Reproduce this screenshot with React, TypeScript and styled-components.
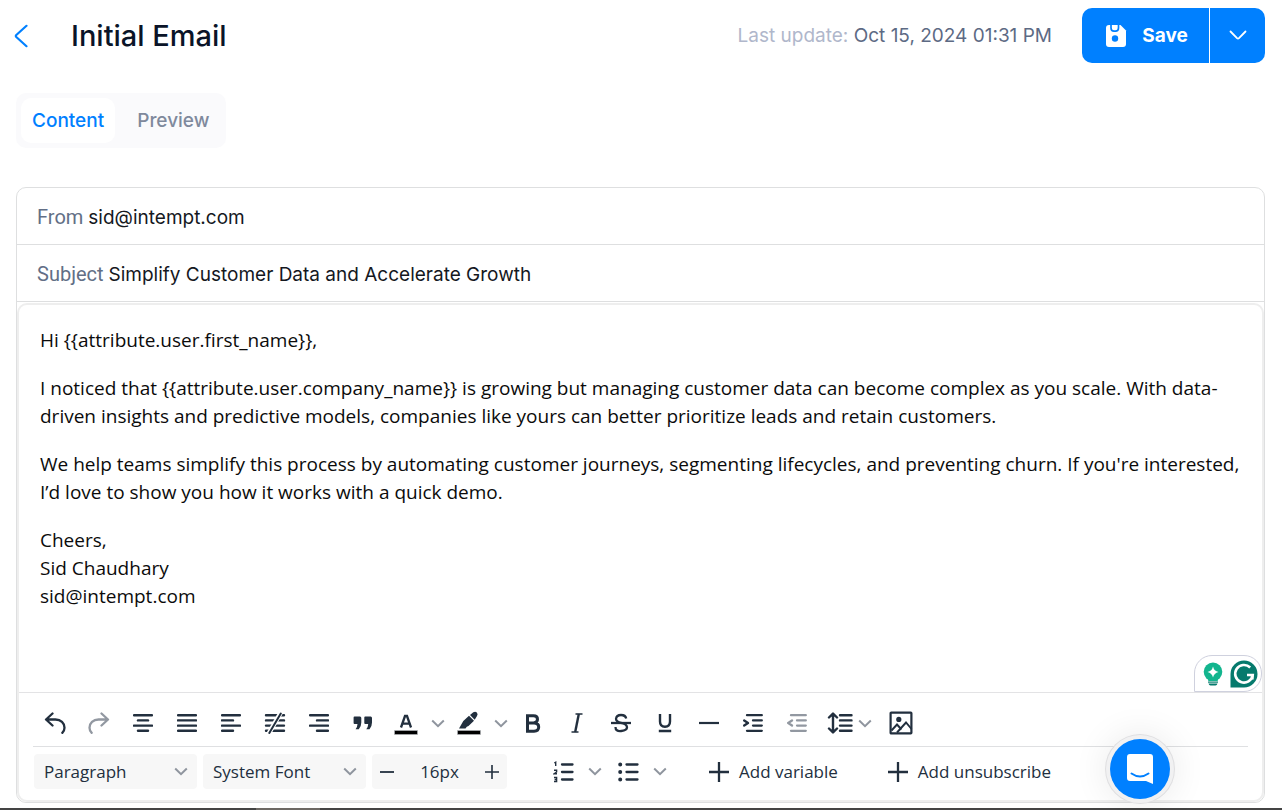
import React, { useState } from "react";
import styled, { createGlobalStyle, css } from "styled-components";

const ui = `Inter, "Liberation Sans", sans-serif`;
const segoe = `"Open Sans", "Noto Sans", sans-serif`;

const GlobalStyle = createGlobalStyle`
  *, *::before, *::after { box-sizing: border-box; }
  body { margin: 0; background: #fff; font-family: ${ui}; color: #0b1424; }
  button, input, select { font: inherit; color: inherit; margin: 0; }
`;

const Page = styled.div`
  min-height: 100vh;
  display: flex;
  flex-direction: column;
`;

const Header = styled.header`
  display: flex;
  align-items: center;
  padding: 8px 17px 0 8px;
`;

const PlainButton = styled.button`
  display: flex;
  align-items: center;
  justify-content: center;
  padding: 0;
  border: 0;
  background: none;
  cursor: pointer;
`;

const BackButton = styled(PlainButton)`
  width: 26px;
  height: 40px;
  color: #0080ff;
`;

const Title = styled.h1`
  margin: 0 0 0 37px;
  flex: 1;
  font-size: 29px;
  line-height: 40px;
  font-weight: 500;
  color: #0a1428;
`;

const LastUpdate = styled.p`
  margin: 0 30px 0 0;
  font-size: 19px;
  line-height: 28px;
  color: #b0b7cb;
`;

const Stamp = styled.time`
  color: #5d6a84;
`;

const SplitButton = styled.div`
  display: flex;
  gap: 1px;
  height: 55px;
  border-radius: 10px;
  overflow: hidden;
`;

const SaveButton = styled(PlainButton)`
  width: 127px;
  padding-left: 2px;
  gap: 15px;
  background: #0080ff;
  color: #fff;
  font-size: 19px;
  font-weight: 700;
`;

const SaveMenuButton = styled(PlainButton)`
  width: 55px;
  background: #0080ff;
  color: #fff;
`;

const Tabs = styled.div`
  display: flex;
  align-self: flex-start;
  margin: 30px 0 0 16px;
  padding: 5px;
  border-radius: 10px;
  background: #fafafc;
`;

const Tab = styled.button<{ $active?: boolean }>`
  height: 45px;
  padding: 0 11px;
  border: 0;
  border-radius: 10px;
  background: ${(p) => (p.$active ? "#fff" : "transparent")};
  color: ${(p) => (p.$active ? "#0080ff" : "#7f899c")};
  font-size: 19px;
  font-weight: 500;
  cursor: pointer;
  & + & { padding: 0 12px 0 22px; }
`;

const Card = styled.main`
  flex: 1;
  display: flex;
  flex-direction: column;
  margin: 39px 17px 5px 16px;
  border: 1px solid #dedfe0;
  border-radius: 10px;
`;

const Field = styled.label`
  display: flex;
  align-items: center;
  gap: 5px;
  height: 57px;
  padding: 2px 20px 0;
  border-bottom: 1px solid #dedfe0;
  font-family: Roboto, "Liberation Sans", sans-serif;
  font-size: 20px;
  color: #626f86;
`;

const FieldInput = styled.input`
  flex: 1;
  min-width: 0;
  padding: 0;
  border: 0;
  outline: 0;
  background: none;
  font-family: ${ui};
  font-size: 19px;
  color: #15181e;
`;

const Editor = styled.section`
  flex: 1;
  display: flex;
  flex-direction: column;
  margin-top: 1px;
  border: 2px solid #eee;
  border-radius: 10px;
  font-family: ${segoe};
`;

const Body = styled.div`
  position: relative;
  flex: 1;
  display: flex;
  flex-direction: column;
  border-bottom: 1px solid #e3e3e5;
`;

const Message = styled.div`
  flex: 1;
  padding: 21px 8px 40px 21px;
  outline: 0;
  font-size: 19px;
  line-height: 28px;
  color: #0b0b0b;
  p { margin: 0 0 20px; }
`;

const Assistant = styled.div`
  position: absolute;
  right: 0;
  bottom: 0;
  display: flex;
  align-items: center;
  gap: 7px;
  height: 37px;
  padding: 0 3px 0 8px;
  border: 1px solid #cfd1de;
  border-radius: 18px 18px 18px 0;
  background: #fff;
`;

const Toolbars = styled.div`
  padding: 0 14px 4px;
`;

const Toolbar = styled.div`
  display: flex;
  align-items: center;
  height: 53px;
  padding-top: 7px;
  & + & { border-top: 1px solid #dfe0e2; height: 50px; padding: 0; padding-left: 1px; }
`;

const Tool = styled(PlainButton)<{ $faded?: boolean }>`
  width: 44px;
  height: 42px;
  flex: none;
  color: ${(p) => (p.$faded ? "#9298a1" : "#222f3e")};
`;

const ToolSplit = styled.div`
  display: flex;
  width: 63px;
  ${Tool}:first-child { width: 42px; }
  ${Tool}:last-child { width: 21px; }
`;

const MenuTool = styled(Tool)`
  width: 60px;
  gap: 5px;
`;

const grayBox = css`
  height: 35px;
  border-radius: 4px;
  background: #f7f7f7;
  color: #222f3e;
  font-size: 17px;
`;

const SelectBox = styled.div`
  position: relative;
  display: flex;
  width: 163px;
  margin-right: 6px;
  svg { position: absolute; right: 9px; top: 13px; pointer-events: none; }
`;

const Select = styled.select`
  ${grayBox}
  width: 100%;
  padding: 0 28px 0 10px;
  border: 0;
  appearance: none;
`;

const Stepper = styled.div`
  ${grayBox}
  display: flex;
  width: 135px;
  margin-right: 35px;
  ${Tool} { width: 30px; height: 35px; }
`;

const SizeInput = styled.input`
  flex: 1;
  min-width: 0;
  padding: 0;
  border: 0;
  background: none;
  text-align: center;
`;

const ListSplit = styled(ToolSplit)`
  width: 65px;
`;

const TextTool = styled(PlainButton)`
  gap: 10px;
  margin-left: 37px;
  color: #222f3e;
  font-size: 17px;
  & + & { margin-left: 50px; }
`;

const Chat = styled(PlainButton)`
  position: fixed;
  right: 112px;
  bottom: 11px;
  width: 60px;
  height: 60px;
  border-radius: 50%;
  background: #0080ff;
  box-shadow: 0 0 0 4px #f1f1f2, 0 0 0 5px #dfdfe1, 0 0 34px 6px rgba(0, 0, 0, 0.08);
`;

const Edge = styled.footer`
  height: 2px;
  background: linear-gradient(90deg, #444 20%, #6d6964 20%, #6d6964 25%, #444 25%);
`;

const Chevron = () => (
  <svg width="14" height="9" viewBox="0 0 14 9" fill="none" stroke="#8f959e" strokeWidth="2">
    <path d="M1.2 1.5 7 7.2l5.8-5.7" />
  </svg>
);

const Lines = ({ rows }: { rows: [number, number][] }) => (
  <svg width="20" height="20" viewBox="0 0 20 20" stroke="currentColor" strokeWidth="2.4" strokeLinecap="round">
    {rows.map(([a, b], i) => (
      <path key={i} d={`M${a} ${2.2 + i * 5.2}H${b}`} />
    ))}
  </svg>
);

const Undo = ({ flip }: { flip?: boolean }) => (
  <svg width="22" height="22" viewBox="0 0 22 22" fill="none" stroke="currentColor" strokeWidth="2.3" strokeLinecap="round" strokeLinejoin="round">
    <g transform={flip ? "translate(22 0) scale(-1 1)" : undefined}>
      <path d="M8.500 1.500 2 7.500l6.500 6M2.400 7.500H11.500c5.300 0 9 3.600 9 8.200 0 1.900-.7 3.700-2.200 5.100" />
    </g>
  </svg>
);

const NoAlign = () => (
  <svg width="22" height="22" viewBox="0 0 22 22" fill="none" stroke="currentColor" strokeWidth="2.4" strokeLinecap="round">
    <path d="M2 3.200H20M2 8.400H20M2 13.600H20M2 18.800H20" />
    <path d="M16.800 .500 4.800 21.500" stroke="#fff" strokeWidth="4.600" strokeLinecap="butt" />
    <path d="M16.800 1.500 5.300 21" strokeWidth="2" />
  </svg>
);

const Quote = () => (
  <svg width="20" height="14" viewBox="0 0 20 14" fill="currentColor">
    <path d="M1.500.5H7Q8.300.5 8.300 2V6.500Q8.300 10.500 5.800 13.200H2.600Q4.500 10.500 4.500 8H1.500Q.6 8 .6 7V1.500Q.6.5 1.500.5Z" />
    <path d="M12.200.5H17.700Q19 .5 19 2V6.500Q19 10.500 16.500 13.200H13.300Q15.200 10.500 15.200 8H12.200Q11.300 8 11.300 7V1.500Q11.300.5 12.200.5Z" />
  </svg>
);

const TextColor = () => (
  <svg width="24" height="24" viewBox="0 0 24 24" fill="none">
    <path d="M7 16.500 11 5h2l4 11.500M8.700 12.700h6.600" stroke="#222f3e" strokeWidth="2.300" />
    <path d="M.500 19.500h23v4h-23z" fill="#000" stroke="#b5b8bc" strokeWidth=".6" />
  </svg>
);

const Highlight = () => (
  <svg width="24" height="24" viewBox="0 0 24 24">
    <path d="M2 17.500 6.300 10 12 4.800l5 5L11.500 15l-1.700.7-1.300 1.800Z" fill="#222f3e" />
    <path d="m13 4 3.300-2.700q2-1.300 3.500.200t.200 3.500L17.700 8.800Z" fill="#222f3e" />
    <path d="M.500 19.500h23v4h-23z" fill="#000" stroke="#b5b8bc" strokeWidth=".6" />
  </svg>
);

const Bold = () => (
  <svg width="16" height="19" viewBox="0 0 16 19" fill="none" stroke="currentColor" strokeWidth="3">
    <path d="M2.500 1.800H8.500Q12.500 1.800 12.500 5.300T8.500 9H2.500ZM2.500 9H9Q13.700 9 13.700 13T9 17.200H2.500Z" />
  </svg>
);

const Italic = () => (
  <svg width="12" height="20" viewBox="0 0 12 20" fill="none" stroke="currentColor">
    <path d="M7.800 1 4.200 19" strokeWidth="2.400" />
    <path d="M4.500 1H11.500M.5 19H7.500" strokeWidth="1.500" />
  </svg>
);

const Strike = () => (
  <svg width="22" height="20" viewBox="0 0 22 20" fill="none" stroke="currentColor" strokeWidth="2.300">
    <path d="M16.200 5.500Q15.500 2 11 2T6 5.800Q6 8.800 11 9.800 17 11 17 14.200T11.200 18 5.500 14" />
    <path d="M1 10H21" />
  </svg>
);

const Underline = () => (
  <svg width="14" height="20" viewBox="0 0 14 20" fill="none" stroke="currentColor" strokeWidth="2.400">
    <path d="M2 1V8.500Q2 13.800 7 13.800T12 8.500V1M.8 18H13.200" />
  </svg>
);

const Rule = () => (
  <svg width="20" height="4" viewBox="0 0 20 4"><path d="M0 2H20" stroke="currentColor" strokeWidth="2.200" /></svg>
);

const Indent = ({ out }: { out?: boolean }) => (
  <svg width="20" height="20" viewBox="0 0 20 20" fill="none" stroke="currentColor" strokeWidth="2.300" strokeLinecap="round">
    <path d="M4 2.200H18.800M10 7.400H18.800M10 12.600H18.800M4 17.800H18.800" />
    <path d={out ? "M5 7.500 1.200 10l3.800 2.500" : "M1.200 7.500 5 10 1.200 12.500"} strokeLinejoin="round" />
  </svg>
);

const LineHeight = () => (
  <svg width="26" height="22" viewBox="0 0 26 22" fill="none" stroke="currentColor" strokeWidth="2.400" strokeLinecap="round" strokeLinejoin="round">
    <path d="M13 3.200H24.500M13 8.400H24.500M13 13.600H24.500M13 18.800H24.500" />
    <path d="M6 2V20M2 5.500 6 1.500l4 4M2 16.500l4 4 4-4" />
  </svg>
);

const Picture = () => (
  <svg width="24" height="24" viewBox="0 0 24 24" fill="none" stroke="currentColor" strokeWidth="2.200">
    <rect x="1.600" y="1.600" width="20.800" height="20.800" rx=".6" />
    <circle cx="9.800" cy="8.400" r="2.600" fill="currentColor" stroke="none" />
    <path d="M2.500 19.500 8 13.500l4.500 5M8 21.500 17 11.500l5.500 6.500" strokeWidth="1.900" />
  </svg>
);

const Plus = ({ size }: { size: number }) => (
  <svg width={size} height={size} viewBox="0 0 20 20" stroke="currentColor" strokeWidth="2.300">
    <path d="M0 10H20M10 0V20" />
  </svg>
);

const Minus = () => (
  <svg width="14" height="14" viewBox="0 0 14 14" stroke="currentColor" strokeWidth="1.800"><path d="M0 7H14" /></svg>
);

const NumberList = () => (
  <svg width="21" height="22" viewBox="0 0 21 22" fill="none" stroke="currentColor" strokeLinecap="round">
    <path d="M9 3.500H19.500M9 11H19.500M9 18.500H19.500" strokeWidth="2.300" />
    <path d="M1.300 2 2.700 1.200V5M1 9.200H3.600V11L1.200 12.800H4M1 16.500H3.600V20.500H1M1.600 18.500H3.500" strokeWidth="1.400" strokeLinecap="butt" />
  </svg>
);

const BulletList = () => (
  <svg width="21" height="20" viewBox="0 0 21 20" stroke="currentColor" strokeWidth="2.300" strokeLinecap="round">
    <path d="M8.500 2.500H19.500M8.500 10H19.500M8.500 17.500H19.500" />
    <path d="M2.200 2.500h.010M2.200 10h.010M2.200 17.500h.010" strokeWidth="4" />
  </svg>
);

const Disk = () => (
  <svg width="22" height="24" viewBox="0 0 22 24">
    <path d="M4 1H15.500L21 6.500V20Q21 23 18 23H4Q1 23 1 20V4Q1 1 4 1Z" fill="#fff" />
    <path d="M6 1V4Q6 7.200 9 7.200H10.500Q13.500 7.200 13.500 4V1" fill="none" stroke="#0080ff" strokeWidth="1.700" />
    <circle cx="10" cy="14.500" r="3.200" fill="#0080ff" />
  </svg>
);

const Bulb = () => (
  <svg width="20" height="24" viewBox="0 0 20 24">
    <circle cx="10" cy="9.800" r="9.300" fill="#12b58e" />
    <path d="M4.500 15h11l-.8 4H5.300Z" fill="#12b58e" />
    <path d="M5 19.500H15v1.200H5z" fill="#067a6d" />
    <path d="M5.500 21.500H14.500Q14 23.500 12.500 23.500H7.500Q6 23.500 5.500 21.500Z" fill="#067a6d" />
    <path d="M10 4.500Q11 9 15.500 10 11 11 10 15.500 9 11 4.500 10 9 9 10 4.500Z" fill="#fff" />
  </svg>
);

const GrammarMark = () => (
  <svg width="28" height="28" viewBox="0 0 28 28" fill="none">
    <path d="M14 .5A13.500 13.500 0 1 1 14 27.500H.5V14A13.500 13.500 0 0 1 14 .5Z" fill="#067a6d" />
    <path d="M20.200 7.500A8.800 8.800 0 1 0 22.700 15H17" stroke="#fff" strokeWidth="2.600" />
    <path d="M22.700 14V19.500" stroke="#fff" strokeWidth="2" />
  </svg>
);

const ChatMark = () => (
  <svg width="28" height="32" viewBox="0 0 28 32">
    <path d="M4 1H24Q27 1 27 4V31L20 28H4Q1 28 1 25V4Q1 1 4 1Z" fill="#fff" />
    <path d="M5.500 20.500Q14 26.500 22.500 20.500" fill="none" stroke="#0080ff" strokeWidth="2" strokeLinecap="round" />
  </svg>
);

const greeting = "Hi {{attribute.user.first_name}},";
const paragraphs = [
  greeting,
  "I noticed that {{attribute.user.company_name}} is growing but managing customer data can become complex as you scale. With data-driven insights and predictive models, companies like yours can better prioritize leads and retain customers.",
  "We help teams simplify this process by automating customer journeys, segmenting lifecycles, and preventing churn. If you're interested, I’d love to show you how it works with a quick demo.",
];

export default function App() {
  const [tab, setTab] = useState("Content");
  return (
    <>
      <GlobalStyle />
      <Page>
        <Header>
          <BackButton aria-label="Back">
            <svg width="14" height="24" viewBox="0 0 14 24" fill="none" stroke="currentColor" strokeWidth="2.200" strokeLinecap="round" strokeLinejoin="round">
              <path d="M12.500 1.800 2.300 11q-1 1 0 2L12.500 22.200" />
            </svg>
          </BackButton>
          <Title>Initial Email</Title>
          <LastUpdate>
            Last update: <Stamp dateTime="2024-10-15T13:31">Oct 15, 2024 01:31 PM</Stamp>
          </LastUpdate>
          <SplitButton>
            <SaveButton>
              <Disk />
              Save
            </SaveButton>
            <SaveMenuButton aria-label="More save options">
              <svg width="18" height="11" viewBox="0 0 18 11" fill="none" stroke="currentColor" strokeWidth="1.800" strokeLinecap="round">
                <path d="M1.500 1.500 8 8.200q1 .9 2 0l6.500-6.700" />
              </svg>
            </SaveMenuButton>
          </SplitButton>
        </Header>

        <Tabs role="tablist">
          {["Content", "Preview"].map((name) => (
            <Tab key={name} role="tab" aria-selected={tab === name} $active={tab === name} onClick={() => setTab(name)}>
              {name}
            </Tab>
          ))}
        </Tabs>

        <Card>
          <Field>
            From
            <FieldInput type="text" defaultValue="sid@intempt.com" />
          </Field>
          <Field>
            Subject
            <FieldInput type="text" defaultValue="Simplify Customer Data and Accelerate Growth" />
          </Field>
          <Editor>
            <Body>
              <Message role="textbox" aria-multiline aria-label="Message" contentEditable suppressContentEditableWarning spellCheck={false}>
                {paragraphs.map((text) => (
                  <p key={text}>{text}</p>
                ))}
                <p>
                  Cheers,
                  <br />
                  Sid Chaudhary
                  <br />
                  sid@intempt.com
                </p>
              </Message>
              <Assistant>
                <Bulb />
                <GrammarMark />
              </Assistant>
            </Body>
            <Toolbars>
              <Toolbar role="toolbar" aria-label="Formatting">
                <Tool aria-label="Undo"><Undo /></Tool>
                <Tool aria-label="Redo" $faded><Undo flip /></Tool>
                <Tool aria-label="Align center"><Lines rows={[[1, 19], [5, 15], [1, 19], [5, 15]]} /></Tool>
                <Tool aria-label="Justify"><Lines rows={[[1, 19], [1, 19], [1, 19], [1, 19]]} /></Tool>
                <Tool aria-label="Align left"><Lines rows={[[1, 19], [1, 12], [1, 19], [1, 12]]} /></Tool>
                <Tool aria-label="No alignment"><NoAlign /></Tool>
                <Tool aria-label="Align right"><Lines rows={[[1, 19], [8, 19], [1, 19], [8, 19]]} /></Tool>
                <Tool aria-label="Blockquote"><Quote /></Tool>
                <ToolSplit>
                  <Tool aria-label="Text color"><TextColor /></Tool>
                  <Tool aria-label="Text color menu"><Chevron /></Tool>
                </ToolSplit>
                <ToolSplit>
                  <Tool aria-label="Background color"><Highlight /></Tool>
                  <Tool aria-label="Background color menu"><Chevron /></Tool>
                </ToolSplit>
                <Tool aria-label="Bold"><Bold /></Tool>
                <Tool aria-label="Italic"><Italic /></Tool>
                <Tool aria-label="Strikethrough"><Strike /></Tool>
                <Tool aria-label="Underline"><Underline /></Tool>
                <Tool aria-label="Horizontal line"><Rule /></Tool>
                <Tool aria-label="Increase indent"><Indent /></Tool>
                <Tool aria-label="Decrease indent" $faded><Indent out /></Tool>
                <MenuTool aria-label="Line height"><LineHeight /><Chevron /></MenuTool>
                <Tool aria-label="Image"><Picture /></Tool>
              </Toolbar>
              <Toolbar role="toolbar" aria-label="Blocks and fonts">
                <SelectBox>
                  <Select aria-label="Block"><option>Paragraph</option></Select>
                  <Chevron />
                </SelectBox>
                <SelectBox>
                  <Select aria-label="Font"><option>System Font</option></Select>
                  <Chevron />
                </SelectBox>
                <Stepper>
                  <Tool aria-label="Decrease font size"><Minus /></Tool>
                  <SizeInput type="text" aria-label="Font size" defaultValue="16px" />
                  <Tool aria-label="Increase font size"><Plus size={14} /></Tool>
                </Stepper>
                <ListSplit>
                  <Tool aria-label="Numbered list"><NumberList /></Tool>
                  <Tool aria-label="Numbered list menu"><Chevron /></Tool>
                </ListSplit>
                <ListSplit>
                  <Tool aria-label="Bullet list"><BulletList /></Tool>
                  <Tool aria-label="Bullet list menu"><Chevron /></Tool>
                </ListSplit>
                <TextTool><Plus size={20} />Add variable</TextTool>
                <TextTool><Plus size={20} />Add unsubscribe</TextTool>
              </Toolbar>
            </Toolbars>
          </Editor>
        </Card>
        <Edge />
      </Page>
      <Chat aria-label="Open chat"><ChatMark /></Chat>
    </>
  );
}
